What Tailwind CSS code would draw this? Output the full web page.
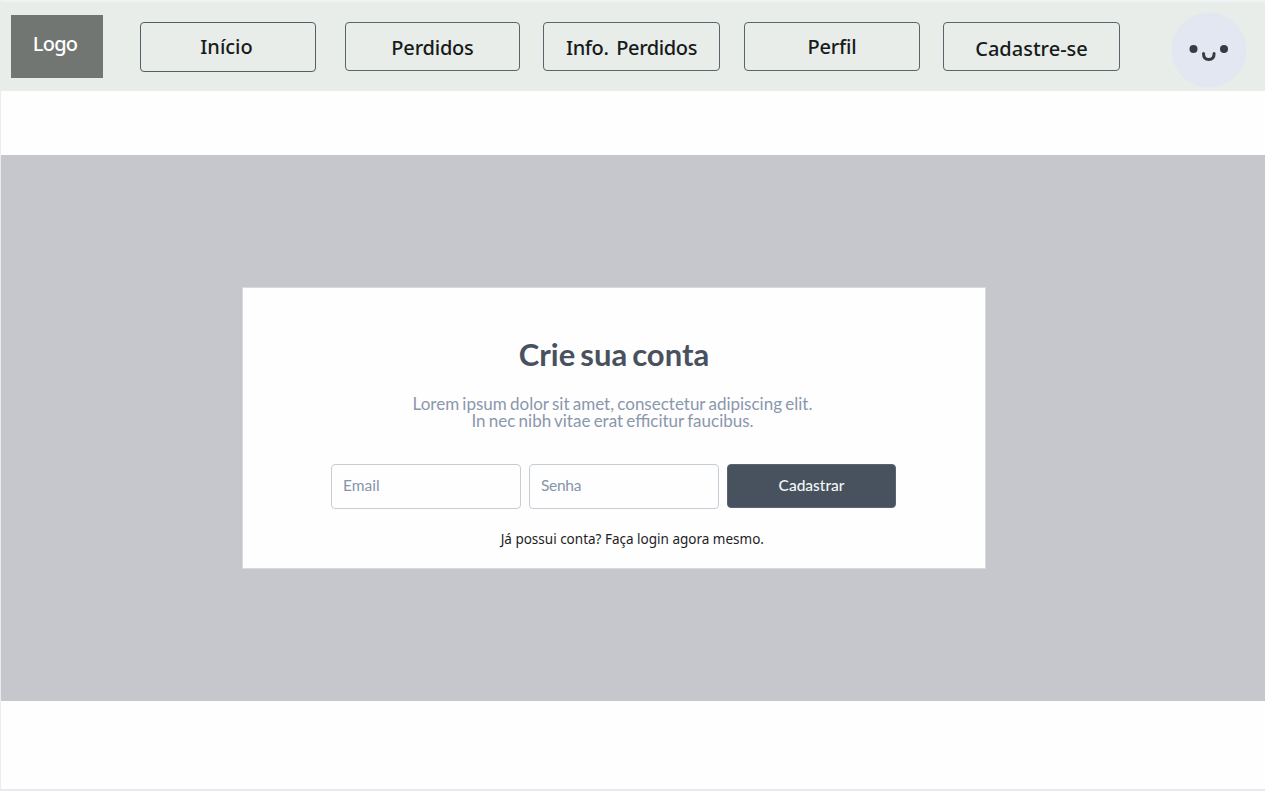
<!DOCTYPE html>
<html lang="pt-BR">
<head>
<meta charset="utf-8">
<title>Crie sua conta</title>
<script src="https://cdn.jsdelivr.net/npm/@tailwindcss/browser@4"></script>
</head>
<body class="h-[791px] overflow-hidden bg-[#fefefe] font-['Lato',sans-serif]">
<div class="flex h-[791px] flex-col border-b-2 border-l border-b-[#e6ebf1] border-l-[#e9edef]">
  <header class="flex h-[91px] shrink-0 items-start border-t-2 border-[#eff3f4] bg-[#e8ede9] pl-[9.500px] font-['Noto_Sans',sans-serif] text-[20px] text-[#171b1b]">
    <div class="mt-[13px] flex h-[63px] w-[92px] justify-center bg-[#717672] pt-[14px] pr-[3px] leading-[30px] font-medium text-white"><span class="tracking-[-0.8px]">Logo</span></div>
    <nav class="ml-[37.500px] mt-5 flex font-medium">
      <a class="flex h-[50px] w-[176px] justify-center rounded-[4px] border border-[#535c67] pt-[9px] pr-[3px] leading-[30px]"><span>Início</span></a>
      <a class="ml-[29px] flex h-[49px] w-[175px] justify-center rounded-[4px] border border-[#59626d] pt-[10px] leading-[30px]"><span class="tracking-[-0.2px]">Perdidos</span></a>
      <a class="ml-[23px] flex h-[49px] w-[177px] justify-center rounded-[4px] border border-[#59626d] pt-[10px] leading-[30px]"><span class="tracking-[-0.4px] [word-spacing:3px]">Info. Perdidos</span></a>
      <a class="ml-[24px] flex h-[49px] w-[176px] justify-center rounded-[4px] border border-[#59626d] pt-[9px] leading-[30px]"><span class="tracking-[-0.2px]">Perfil</span></a>
      <a class="ml-[23px] flex h-[49px] w-[177px] justify-center rounded-[4px] border border-[#59626d] pt-[11px] leading-[30px]"><span>Cadastre-se</span></a>
    </nav>
    <svg class="ml-[51px] mt-[10px] h-[76px] w-[76px]" viewBox="0 0 76 76" fill="none">
      <circle cx="38" cy="38" r="37.500" fill="#e3e7f2"/>
      <circle cx="22.500" cy="37" r="4" fill="#393b42"/>
      <circle cx="53" cy="37" r="4" fill="#393b42"/>
      <path d="M32.500 41.500c0 3.800 2 6 5.300 6s5.300-2.200 5.300-6" stroke="#393b42" stroke-width="3" stroke-linecap="round"/>
    </svg>
  </header>
  <main class="mt-16 flex h-[546px] shrink-0 items-start bg-[#c6c7cd] pl-[241px] pt-[132px]">
    <section class="flex h-[282px] w-[744px] flex-col items-center border border-[#d9dade] bg-[#fefefe]">
      <h1 class="mt-[46px] text-[31px] leading-10 font-bold text-[#48525e] [word-spacing:-2.500px]">Crie sua conta</h1>
      <p class="mt-[21px] pr-[3px] text-center text-[17px] leading-[17px] text-[#8a97ad] [word-spacing:-1.100px]">Lorem ipsum dolor sit amet, consectetur adipiscing elit.<br>In nec nibh vitae erat efficitur faucibus.</p>
      <form class="mt-[35px] mr-[1px] flex gap-2 text-[15.500px] leading-5">
        <div class="h-[45px] w-[190px] rounded-[4px] border border-[#c6cdd5] px-[11px] pt-[10px] text-[#8794aa]"><span>Email</span></div>
        <div class="h-[45px] w-[190px] rounded-[4px] border border-[#c6cdd5] px-[11px] pt-[10px] text-[#8794aa]"><span class="tracking-[-0.3px]">Senha</span></div>
        <button type="button" class="flex h-[44px] w-[169px] justify-center rounded-[4px] border border-[#596572] bg-[#48525e] pt-[10px] font-medium text-[#f3f5f7]"><span>Cadastrar</span></button>
      </form>
      <p class="mt-[19px] ml-9 origin-center scale-x-[0.9] font-['Noto_Sans',sans-serif] text-[15px] leading-5 whitespace-nowrap text-[#1d1d1f]">Já possui conta? Faça login agora mesmo.</p>
    </section>
  </main>
</div>
</body>
</html>
